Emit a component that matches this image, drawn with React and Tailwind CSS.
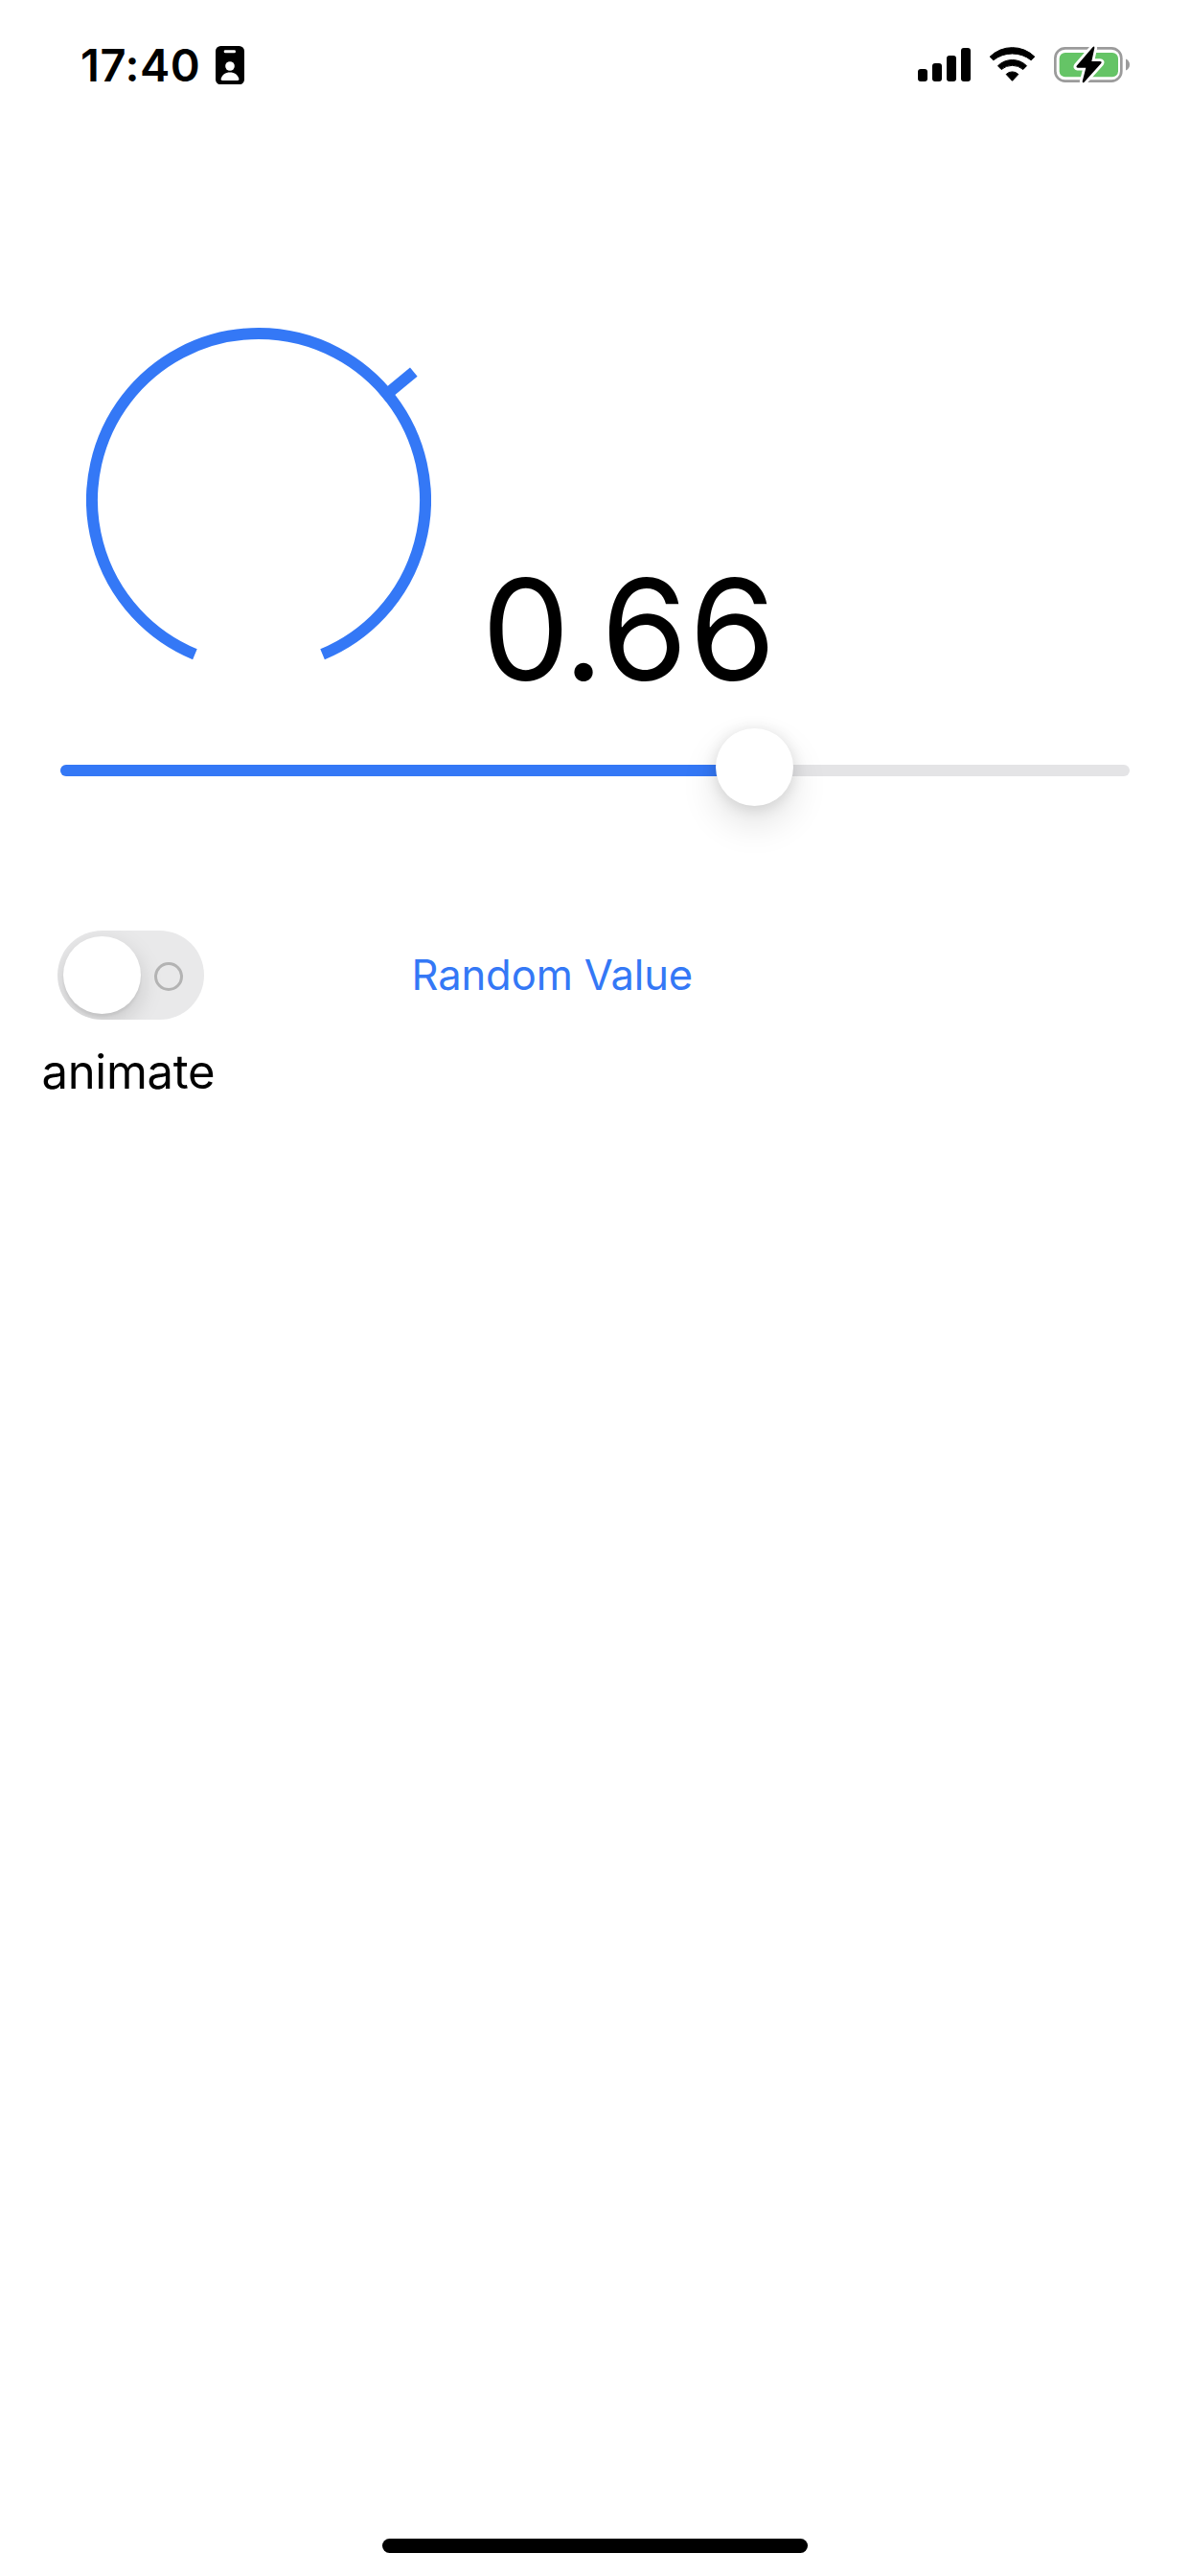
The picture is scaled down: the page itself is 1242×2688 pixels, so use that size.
function BadgeIcon() {
  return (
    <svg viewBox="465 53 90 121" className="ml-[17.6px] mt-[9.7px] h-[40.3px] w-[30px]">
      <rect x="465" y="53" width="90" height="121" rx="16" fill="#000" />
      <rect x="491" y="66" width="37" height="9" rx="4.5" fill="#fff" />
      <circle cx="510" cy="116" r="14.5" fill="#fff" />
      <path d="M486 161Q481 161 482 156C485 143 496 135.500 510 135.500S535 143 538 156Q539 161 534 161Z" fill="#fff" />
    </svg>
  );
}

function SignalIcon() {
  return (
    <div className="flex h-[35px] items-end gap-[5px]">
      <div className="h-[13px] w-[10px] rounded-[3px] bg-black" />
      <div className="h-[19px] w-[10px] rounded-[3px] bg-black" />
      <div className="h-[27px] w-[10px] rounded-[3px] bg-black" />
      <div className="h-[35px] w-[10px] rounded-[3px] bg-black" />
    </div>
  );
}

function WifiIcon() {
  return (
    <svg viewBox="33 27 147 111" className="ml-[19px] h-[37px] w-[49px]" stroke="#000" strokeWidth="3" strokeLinejoin="round">
      <path d="M36.500 57.500A100 100 0 0 1 176.500 57.500L165.500 68.500A95 95 0 0 0 47.500 68.500Z" />
      <path d="M61.500 86A64 64 0 0 1 151.500 86L140.500 97.500A52 52 0 0 0 72.500 97.500Z" />
      <path d="M87.500 112.500A27 27 0 0 1 125.500 112.500L106.500 133Z" />
    </svg>
  );
}

function BatteryIcon() {
  const bolt =
    "M149 27L98 86Q95 91 101 92L127 92L116 135Q117 141 121 138L175 78Q178 72 171 72L145 72L154 30Q154 23 149 27Z";
  return (
    <svg viewBox="24 18 243 129" className="ml-[18px] h-[43px] w-[81px]">
      <rect x="31" y="31" width="207" height="103" rx="31" fill="none" stroke="#9b9b9b" strokeWidth="8" />
      <rect x="44" y="45" width="184" height="76" rx="18" fill="#65c466" />
      <path d="M252 64.500Q264 70 264 82.500T252 100.500Z" fill="#9b9b9b" />
      <path d={bolt} fill="#fff" stroke="#fff" strokeWidth="17" strokeLinejoin="round" />
      <path d={bolt} fill="#000" />
    </svg>
  );
}

function StatusBar() {
  return (
    <header className="flex h-[110px] items-start justify-between pt-[38px] pr-[62.500px] pl-[84px]">
      <div className="flex items-start">
        <span className="w-[123.400px] text-[47px] leading-[60px] font-semibold tracking-[0.55px] whitespace-nowrap">17:40</span>
        <BadgeIcon />
      </div>
      <div className="flex h-[60px] items-start">
        <div className="mt-[12px]"><SignalIcon /></div>
        <div className="mt-[11px]"><WifiIcon /></div>
        <div className="mt-[8px]"><BatteryIcon /></div>
      </div>
    </header>
  );
}

function Knob() {
  return (
    <svg viewBox="0 0 360 360" className="size-[360px]" fill="none" stroke="#3478f6" strokeWidth="12">
      <path d="M113.410 340.760A174 174 0 1 1 246.590 340.760" />
      <path d="M309.450 72.910L341.810 46.140" />
    </svg>
  );
}

export default function App() {
  return (
    <div className="flex h-[2688px] w-[1242px] flex-col bg-white font-['Inter',sans-serif] text-black">
      <StatusBar />

      <main className="flex-1">
        <section className="flex h-[650px] items-start pt-[232px] pl-[90px]">
          <Knob />
          <p className="mt-[240px] ml-[52.700px] text-[146px] leading-[150px] whitespace-nowrap">
            <span className="tracking-[-3px]">0.</span><span className="tracking-[1.500px]">66</span>
          </p>
        </section>

        <section className="h-[81px] pt-[38px] pr-[63px] pl-[63px]">
          <div className="relative h-[12px] rounded-full bg-[#e4e4e6]">
            <div className="h-full w-[724px] rounded-l-full bg-[#3478f6]" />
            <div className="absolute top-[-38px] left-[684px] size-[81px] rounded-full bg-white shadow-[0_18px_39px_rgba(0,0,0,0.12),0_2px_16px_rgba(0,0,0,0.12)]" />
          </div>
        </section>

        <section className="flex items-start pt-[130px] pl-[43.500px]">
          <div className="w-[180px]">
            <div className="ml-[16.500px] flex h-[93px] w-[153px] items-center overflow-hidden rounded-full bg-[#e9e9ea] pl-[6px]">
              <div className="size-[81px] rounded-full bg-white shadow-[0_9px_24px_rgba(0,0,0,0.15),0_3px_3px_rgba(0,0,0,0.06)]" />
              <div className="mt-[3px] ml-[14px] size-[30px] rounded-full border-[3px] border-[#b3b3b3]" />
            </div>
            <p className="mt-[25px] text-[49px] leading-[60px] tracking-[-0.3px] whitespace-nowrap">animate</p>
          </div>
          <button className="mt-[16px] ml-[206px] text-[43.500px] leading-[60px] tracking-[-0.1px] whitespace-nowrap text-[#3478f6]">
            Random Value
          </button>
        </section>
      </main>

      <footer className="flex justify-center pb-[24px]">
        <div className="h-[15px] w-[444px] rounded-full bg-black" />
      </footer>
    </div>
  );
}
